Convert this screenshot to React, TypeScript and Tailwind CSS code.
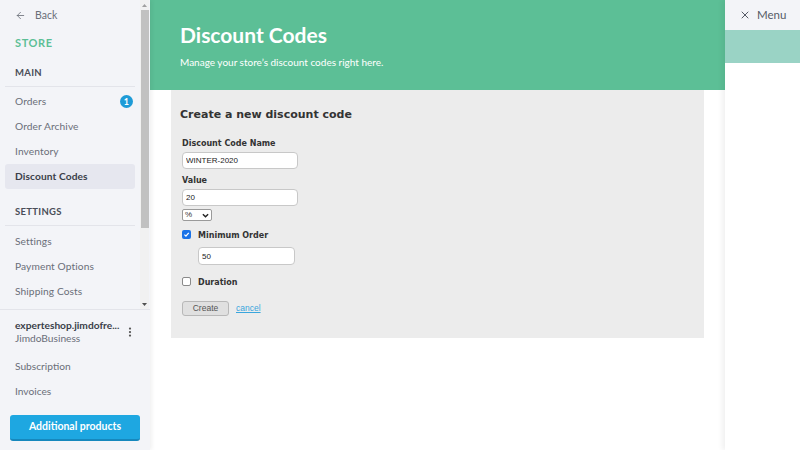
import { X, ArrowLeft, MoreVertical } from "lucide-react";

const lato = { fontFamily: "Lato, 'Open Sans', sans-serif" };
const arial = { fontFamily: "'Liberation Sans', Arial, sans-serif" };

function NavItem({ label, active, badge }: { label: string; active?: boolean; badge?: string }) {
  return (
    <div
      className={
        "flex items-center justify-between h-[25px] px-[10px] mx-[5px] rounded-[3px] text-[10.2px] tracking-[0.1px] " +
        (active ? "bg-[#e6e7ef] font-bold text-[#3a3e48]" : "text-[#6a6e78]")
      }
    >
      <span>{label}</span>
      {badge && (
        <span className="w-[13px] h-[13px] -mr-[8px] rounded-full bg-[#1e9bd7] text-white text-[9px] font-bold flex items-center justify-center">
          {badge}
        </span>
      )}
    </div>
  );
}

function SectionTitle({ label }: { label: string }) {
  return (
    <div className="mx-[5px] px-[10px] pb-[6px] pt-[2px] border-b border-[#e3e4ea] text-[9.5px] font-bold tracking-[0.3px] text-[#4a4e58]">
      {label}
    </div>
  );
}

function Sidebar() {
  return (
    <aside
      className="w-[150px] shrink-0 h-[450px] bg-[#f3f4f8] flex flex-col shadow-[2px_0_4px_rgba(0,0,0,0.06)] z-10"
      style={lato}
    >
      <div className="h-[310px] flex border-b border-[#e3e4ea]">
        <div className="flex-1 flex flex-col">
          <div className="flex items-center gap-[9px] pl-[15px] pt-[2px] h-[29px] text-[10.5px] text-[#6a6e78]">
            <ArrowLeft size={11} strokeWidth={1.8} />
            <span>Back</span>
          </div>
          <div className="pl-[15px] pt-[6px] pb-[12px] text-[11px] font-bold tracking-[0.6px] text-[#5cbf96]">
            STORE
          </div>
          <SectionTitle label="MAIN" />
          <div className="flex flex-col pt-[2px]">
            <NavItem label="Orders" badge="1" />
            <NavItem label="Order Archive" />
            <NavItem label="Inventory" />
            <NavItem label="Discount Codes" active />
          </div>
          <div className="pt-[14px]">
            <SectionTitle label="SETTINGS" />
          </div>
          <div className="flex flex-col pt-[3px]">
            <NavItem label="Settings" />
            <NavItem label="Payment Options" />
            <NavItem label="Shipping Costs" />
          </div>
        </div>
        <div className="w-[9px] mr-[1px] bg-[#f1f1f1] flex flex-col items-center">
          <div className="h-[10px] flex items-center justify-center text-[#a0a0a0]">
            <svg width="5" height="3" viewBox="0 0 5 3"><path d="M0 3 L2.5 0 L5 3 Z" fill="currentColor" /></svg>
          </div>
          <div className="w-[8px] h-[218px] bg-[#c1c1c1]" />
          <div className="flex-1" />
          <div className="h-[10px] flex items-center justify-center text-[#505050]">
            <svg width="5" height="3" viewBox="0 0 5 3"><path d="M0 0 L2.5 3 L5 0 Z" fill="currentColor" /></svg>
          </div>
        </div>
      </div>
      <div className="flex items-start justify-between pl-[15px] pr-[14px] pt-[9px]">
        <div className="leading-[13px]">
          <div className="text-[10.2px] font-bold text-[#3a3e48]">experteshop.jimdofre...</div>
          <div className="text-[10.2px] text-[#6a6e78]">JimdoBusiness</div>
        </div>
        <MoreVertical size={12} strokeWidth={2.5} className="mt-[7px] text-[#555]" />
      </div>
      <div className="flex flex-col pt-[9px] text-[10.2px] text-[#6a6e78]">
        <div className="h-[25px] flex items-center pl-[15px]">Subscription</div>
        <div className="h-[25px] flex items-center pl-[15px]">Invoices</div>
      </div>
      <div className="px-[10px] pt-[8px]">
        <button className="w-full h-[26px] rounded-[3px] bg-[#1ea7e1] border-b-2 border-[#1688bd] text-white text-[10.5px] font-bold">
          Additional products
        </button>
      </div>
    </aside>
  );
}

function Label({ children }: { children: string }) {
  return <label className="block text-[8px] leading-[12px] font-bold text-[#333]">{children}</label>;
}

function TextInput({ value, width, height }: { value: string; width: string; height: string }) {
  return (
    <input
      readOnly
      value={value}
      className={"block " + width + " " + height + " bg-white border border-[#c8c8c8] rounded-[4px] px-[3px] text-[8px] text-[#222]"}
      style={arial}
    />
  );
}

function Checkbox({ checked }: { checked?: boolean }) {
  return checked ? (
    <span className="w-[9px] h-[9px] shrink-0 rounded-[2px] bg-[#1a73e8] flex items-center justify-center">
      <svg width="7" height="7" viewBox="0 0 10 10">
        <path d="M2 5.2 L4.2 7.4 L8.2 2.6" stroke="white" strokeWidth="1.8" fill="none" />
      </svg>
    </span>
  ) : (
    <span className="w-[9px] h-[9px] shrink-0 rounded-[2px] bg-white border border-[#8a8a8a]" />
  );
}

function Main() {
  return (
    <main className="flex-1 h-[450px] bg-white flex flex-col">
      <header className="h-[90px] bg-[#5cbf96] px-[30px] pt-[22px] text-white" style={lato}>
        <h1 className="text-[21px] font-bold leading-[26px]">Discount Codes</h1>
        <p className="text-[10px] mt-[7px]">Manage your store’s discount codes right here.</p>
      </header>
      <section
        className="mx-[21px] h-[248px] bg-[#ececec] px-[9px] pt-[17px] text-[#333]"
        style={{ fontFamily: "'DejaVu Sans', Verdana, sans-serif" }}
      >
        <h2 className="text-[11px] leading-[16px] font-bold text-[#333]">Create a new discount code</h2>
        <div className="pl-[2px] pt-[15px] flex flex-col items-start">
          <Label>Discount Code Name</Label>
          <div className="mt-[2px]">
            <TextInput value="WINTER-2020" width="w-[116px]" height="h-[17px]" />
          </div>
          <div className="mt-[6px]">
            <Label>Value</Label>
          </div>
          <div className="mt-[2px]">
            <TextInput value="20" width="w-[116px]" height="h-[17px]" />
          </div>
          <div
            className="mt-[3px] w-[30px] h-[12px] bg-white border border-[#9a9a9a] rounded-[2px] flex items-center justify-between px-[2px] text-[8px]"
            style={arial}
          >
            <span>%</span>
            <svg width="7" height="5" viewBox="0 0 8 5"><path d="M1 1 L4 4 L7 1" stroke="#222" strokeWidth="1.6" fill="none" /></svg>
          </div>
          <div className="mt-[9px] flex items-start gap-[7px]">
            <Checkbox checked />
            <span className="text-[8px] leading-[12px] font-bold">Minimum Order</span>
          </div>
          <div className="pl-[16px] mt-[5px]">
            <TextInput value="50" width="w-[97px]" height="h-[18px]" />
          </div>
          <div className="mt-[12px] flex items-start gap-[7px]">
            <Checkbox />
            <span className="text-[8px] leading-[12px] font-bold">Duration</span>
          </div>
          <div className="mt-[12px] flex items-center gap-[7px]" style={arial}>
            <button className="w-[47px] h-[15px] bg-[#e0e0e0] border border-[#b8b8b8] rounded-[3px] text-[8.5px] text-[#555]">
              Create
            </button>
            <a className="text-[8.5px] text-[#3aa6dd] underline">cancel</a>
          </div>
        </div>
      </section>
    </main>
  );
}

function MenuPanel() {
  return (
    <aside
      className="w-[75px] shrink-0 h-[450px] bg-white flex flex-col shadow-[-3px_0_5px_rgba(0,0,0,0.06)] z-10"
      style={lato}
    >
      <div className="h-[30px] bg-[#f3f4f8] flex items-center gap-[6px] pl-[14px] text-[#555a66]">
        <X size={12} strokeWidth={2} />
        <span className="text-[11.5px]">Menu</span>
      </div>
      <div className="h-[33px] bg-[#9ad3c5]" />
    </aside>
  );
}

export default function App() {
  return (
    <div className="w-[800px] h-[450px] flex overflow-hidden bg-white">
      <Sidebar />
      <Main />
      <MenuPanel />
    </div>
  );
}
